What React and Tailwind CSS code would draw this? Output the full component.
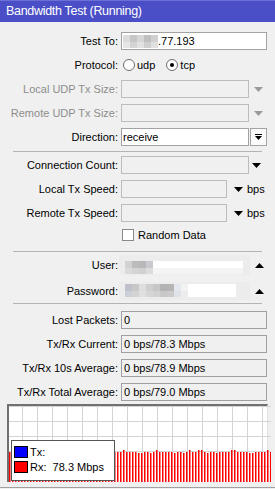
const DownArrow = ({ color = '#000' }) => (
  <svg width="9" height="5" viewBox="0 0 9 5" className="block">
    <path d="M0 0h9L4.5 5z" fill={color} />
  </svg>
);

const UpArrow = () => (
  <svg width="9" height="5" viewBox="0 0 9 5" className="block">
    <path d="M0 5h9L4.5 0z" fill="#000" />
  </svg>
);

function Row({ label, disabled, children, className = 'h-6' }) {
  return (
    <div className={`flex items-center ${className}`}>
      <div className={`w-[118px] shrink-0 text-right ${disabled ? 'text-[#8d8d8d]' : 'text-black'}`}>{label}</div>
      <div className="ml-[3px] flex items-center">{children}</div>
    </div>
  );
}

function Separator({ className }) {
  return (
    <div className={className}>
      <div className="mx-[13px] h-px bg-[#b4b4b4]" />
    </div>
  );
}

// pixel blur blocks for hidden values
function Blur({ top, bottom }) {
  return (
    <div className="flex flex-col">
      <div className="flex h-[7px]">
        {top.map((c, i) => (
          <div key={i} className="w-[7px]" style={{ background: c }} />
        ))}
      </div>
      <div className="flex h-[6px]">
        {bottom.map((c, i) => (
          <div key={i} className="w-[7px]" style={{ background: c }} />
        ))}
      </div>
    </div>
  );
}

const bars = Array.from({ length: 88 }, (_, i) => {
  const v = Math.sin(i * 1.7) + Math.sin(i * 0.53);
  return v > 1.1 ? 44 : v < -1.1 ? 47 : 46;
});

function Graph() {
  return (
    <div className="relative mx-[7px] h-[78px] border-t-2 border-l-2 border-r border-t-[#707070] border-l-[#707070] border-r-[#e2e2e2] bg-white">
      <svg width="262" height="76" className="block">
        {Array.from({ length: 18 }, (_, k) => (
          <rect key={'v' + k} x={13 + 15 * k} y="0" width="1" height="76" fill="#d4d4d4" />
        ))}
        {[0, 15, 30, 45, 60].map((y) => (
          <rect key={'h' + y} x="0" y={y} width="262" height="1" fill="#d4d4d4" />
        ))}
        {bars.map((t, i) => (
          <rect key={i} x={i * 3} y={t} width="1.5" height={76 - t} fill="#ff0000" />
        ))}
      </svg>
      <div className="absolute left-[2px] top-[34px] h-[41px] w-[104px] border border-[#555] bg-white text-[11px] text-black">
        <div className="mt-[5px] flex items-center">
          <div className="ml-[2px] h-[12px] w-[14px] border border-black bg-[#0000ff]" />
          <span className="ml-[2px] leading-[12px]">Tx:</span>
        </div>
        <div className="mt-[3px] flex items-center">
          <div className="ml-[2px] h-[12px] w-[14px] border border-black bg-[#ff0000]" />
          <span className="ml-[2px] leading-[12px] whitespace-pre">Rx:  78.3 Mbps</span>
        </div>
      </div>
    </div>
  );
}

export default function App() {
  const enabledInput = 'h-[18px] border border-[#a3a3a3] bg-white';
  const disabledInput = 'h-[18px] border border-[#bcbcbc] bg-[#f0f0f0]';
  const statusInput = 'h-[18px] w-[146px] border border-[#a0a0a0] bg-[#f0f0f0] pl-[2px] leading-[16px] text-black';

  return (
    <div className="h-[489px] w-[275px] overflow-hidden bg-[#f0f0f0] font-['Liberation_Sans',Arial,sans-serif] text-[11px]">
      {/* Title */}
      <div className="h-[22px] border-t border-[#6c6fd6] bg-[#4b4fc7] pl-[6px] text-[12.5px] leading-[20px] tracking-[-0.3px] text-white">
        Bandwidth Test (Running)
      </div>

      <div className="pt-[7px]">
        <Row label="Test To:">
          <div className={`${enabledInput} flex w-[146px] items-center pl-[1px]`}>
            <Blur
              top={['#dcdcdc', '#c6c6c6', '#d6d6d6', '#bfbfc2', '#d0d0d0']}
              bottom={['#e6e6e6', '#d4d4d4', '#e2e2e2', '#cfcfcf', '#e0e0e0']}
            />
            <span className="leading-[16px]">.77.193</span>
          </div>
        </Row>

        <Row label="Protocol:">
          <div className="ml-[2px] h-3 w-3 rounded-full border border-[#6e6e6e] bg-white" />
          <span className="ml-[2px]">udp</span>
          <div className="ml-[11px] flex h-3 w-3 items-center justify-center rounded-full border border-[#6e6e6e] bg-white">
            <div className="h-[4px] w-[4px] rounded-full bg-black" />
          </div>
          <span className="ml-[2px]">tcp</span>
        </Row>

        <Row label="Local UDP Tx Size:" disabled>
          <div className={`${disabledInput} w-[128px]`} />
          <div className="ml-[5px]">
            <DownArrow color="#9a9a9a" />
          </div>
        </Row>

        <Row label="Remote UDP Tx Size:" disabled>
          <div className={`${disabledInput} w-[128px]`} />
          <div className="ml-[5px]">
            <DownArrow color="#9a9a9a" />
          </div>
        </Row>

        <Row label="Direction:">
          <div className={`${enabledInput} w-[128px] pl-[1px] leading-[16px]`}>receive</div>
          <div className="ml-[1px] flex h-[18px] w-[17px] items-center justify-center border border-[#a3a3a3] bg-[#fafafa]">
            <svg width="7" height="7" viewBox="0 0 7 7" className="block">
              <rect x="0" y="0" width="7" height="1" fill="#000" />
              <path d="M0 2h7L3.5 6z" fill="#000" />
            </svg>
          </div>
        </Row>

        <Separator className="pt-[2px] pb-[1px]" />

        <Row label="Connection Count:">
          <div className={`${disabledInput} w-[128px]`} />
          <div className="ml-[3px]">
            <DownArrow />
          </div>
        </Row>

        <Row label="Local Tx Speed:">
          <div className={`${disabledInput} w-[106px]`} />
          <div className="ml-[7px]">
            <DownArrow />
          </div>
          <span className="ml-[4px]">bps</span>
        </Row>

        <Row label="Remote Tx Speed:">
          <div className={`${disabledInput} w-[106px]`} />
          <div className="ml-[7px]">
            <DownArrow />
          </div>
          <span className="ml-[4px]">bps</span>
        </Row>

        <Row label="" className="h-5">
          <div className="ml-[1px] h-3 w-3 border border-[#8a8a8a] bg-white" />
          <span className="ml-[4px]">Random Data</span>
        </Row>

        <Separator className="pt-[6px] pb-[3px]" />

        <Row label="User:" className="h-5">
          <div className="-ml-[2px] flex h-5 w-[131px] items-start bg-[#ececec] pl-[6px] pt-[6px]">
            <Blur
              top={['#d2d2d2', '#bcbcbc', '#b8b8b8', '#c9c9cf']}
              bottom={['#dadada', '#d4d4d4', '#d0d0d0', '#dcdcdc']}
            />
            <div className="flex flex-col">
              <div className="h-[7px] w-[90px] bg-white" />
              <div className="h-[6px] w-[90px] bg-[#f4f4f4]" />
            </div>
          </div>
          <div className="ml-[5px]">
            <UpArrow />
          </div>
        </Row>

        <Row label="Password:" className="mt-[7px] h-[18px]">
          <div className="-ml-[2px] flex h-[18px] w-[131px] items-start bg-[#ececec] pl-[6px] pt-[2px]">
            <Blur
              top={['#bfc0ca', '#c8c8c8', '#dedede', '#cfcfcf', '#c6c6c6', '#b3b3b3', '#b5b5b5', '#e4e8ee', '#f2f2f2']}
              bottom={['#cccfd8', '#d4d4d4', '#e0e0e0', '#d6d6d6', '#d2d2d2', '#c8c8c8', '#cacaca', '#dfe2e6', '#ececec']}
            />
            <div className="flex flex-col">
              <div className="h-[13px] w-[48px] bg-white" />
            </div>
          </div>
          <div className="ml-[5px]">
            <UpArrow />
          </div>
        </Row>

        <Separator className="pt-[3px] pb-[4px]" />

        <Row label="Lost Packets:">
          <div className={statusInput}>0</div>
        </Row>
        <Row label="Tx/Rx Current:">
          <div className={statusInput}>0 bps/78.3 Mbps</div>
        </Row>
        <Row label="Tx/Rx 10s Average:">
          <div className={statusInput}>0 bps/78.9 Mbps</div>
        </Row>
        <Row label="Tx/Rx Total Average:">
          <div className={statusInput}>0 bps/79.0 Mbps</div>
        </Row>

        <Graph />

        <div className="h-[5px]" />
        <div className="h-px bg-[#a0a0a0]" />
      </div>
    </div>
  );
}
